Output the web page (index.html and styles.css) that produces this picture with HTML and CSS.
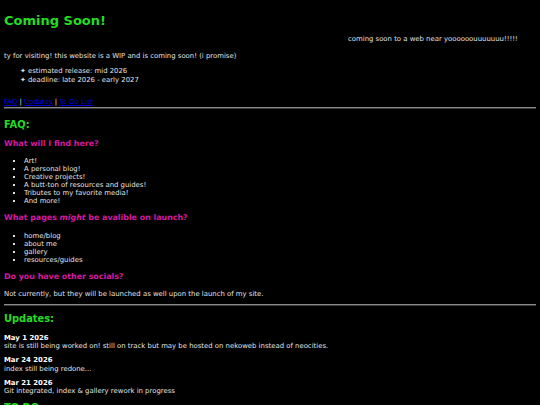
FILE: index.html
```html
<!DOCTYPE html>
<html>
<head>
<meta charset="utf-8">
<title>Coming Soon!</title>
<link rel="stylesheet" href="styles.css">
</head>
<body>
<h1 class="title">Coming Soon!</h1>
<div class="marquee"><span>coming soon to a web near yoooooouuuuuuu!!!!!</span></div>
<p class="intro">ty for visiting! this website is a WIP and is coming soon! (i promise)</p>
<ul class="stars">
  <li>estimated release: mid 2026</li>
  <li>deadline: late 2026 - early 2027</li>
</ul>
<div class="nav"><a href="#faq">FAQ</a> | <a href="#updates">Updates</a> | <a href="#todo">To-Do List</a></div>
<hr class="rule">
<h2 class="section" id="faq">FAQ:</h2>
<h3 class="question">What will I find here?</h3>
<ul class="list">
  <li>Art!</li>
  <li>A personal blog!</li>
  <li>Creative projects!</li>
  <li>A butt-ton of resources and guides!</li>
  <li>Tributes to my favorite media!</li>
  <li>And more!</li>
</ul>
<h3 class="question">What pages <i>might</i> be avalible on launch?</h3>
<ul class="list">
  <li>home/blog</li>
  <li>about me</li>
  <li>gallery</li>
  <li>resources/guides</li>
</ul>
<h3 class="question">Do you have other socials?</h3>
<p class="answer">Not currently, but they will be launched as well upon the launch of my site.</p>
<hr class="rule">
<h2 class="section tight" id="updates">Updates:</h2>
<div class="update first">
  <div class="date">May 1 2026</div>
  <div>site is still being worked on! still on track but may be hosted on nekoweb instead of neocities.</div>
</div>
<div class="update">
  <div class="date">Mar 24 2026</div>
  <div>index still being redone...</div>
</div>
<div class="update">
  <div class="date">Mar 21 2026</div>
  <div>Git integrated, index &amp; gallery rework in progress</div>
</div>
<h2 class="section last" id="todo">TO DO:</h2>
</body>
</html>
```
FILE: styles.css
```css
html { background: #000; }
body {
  margin: 4px;
  background: #000;
  color: #e2e2e2;
  font-family: "DejaVu Sans", Verdana, sans-serif;
  font-size: 6.9px;
  line-height: 8px;
}
.title {
  color: #22dd22;
  font-size: 13px;
  line-height: 15px;
  margin: 9px 0 0;
}
.marquee {
  margin-top: 7px;
  padding-left: 344px;
  white-space: nowrap;
}
.intro { margin: 9px 0 7px; }
.stars {
  margin: 0;
  padding-left: 24px;
  list-style-type: "\2726  ";
}
.stars li { line-height: 9px; }
.nav { margin: 13px 0 0; }
.nav a { color: #0000dd; }
.rule {
  border: none;
  border-top: 1px solid #8a8a8a;
  border-bottom: 1px solid #3a3a3a;
  margin: 1px 0 0;
}
.section {
  color: #22dd22;
  font-size: 9.9px;
  line-height: 11px;
  margin: 9.5px 0 9px;
}
.section.tight { margin-top: 7.5px; }
.section.last { margin-top: 6.5px; }
.question {
  color: #d4189f;
  font-size: 7.9px;
  line-height: 9px;
  margin: 8px 0 9px;
}
.list {
  margin: 9.5px 0 7.5px;
  padding-left: 20px;
  list-style-type: square;
}
.answer { margin: 8px 0 6px; }
.update { margin: 7px 0 6.5px; }
.update.first { margin-top: 10.5px; }
.date { font-weight: bold; color: #fff; line-height: 7.5px; }
```
